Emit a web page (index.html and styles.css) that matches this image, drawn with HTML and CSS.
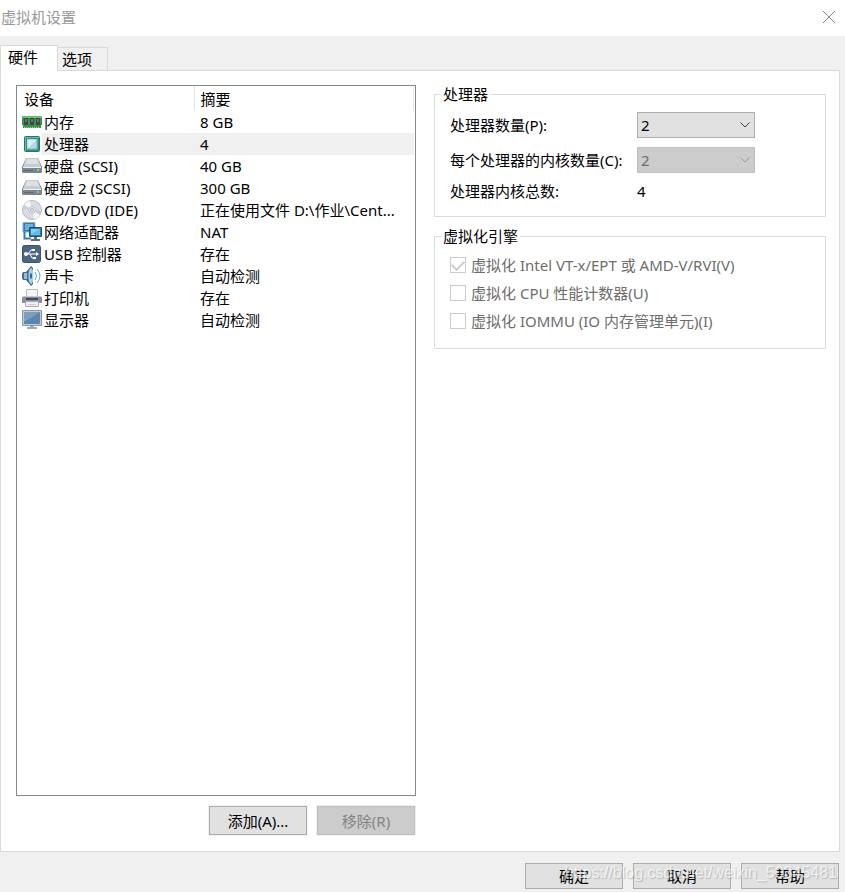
FILE: index.html
```html
<!DOCTYPE html>
<html lang="zh-CN">
<head>
<meta charset="utf-8">
<title>虚拟机设置</title>
<link rel="stylesheet" href="styles.css">
</head>
<body>
<main class="dialog">
  <header class="titlebar">
    <h1 class="title">虚拟机设置</h1>
    <button class="close" type="button" aria-label="关闭">
      <svg width="14" height="14" viewBox="0 0 14 14"><path d="M1 1L13 13M13 1L1 13" stroke="#858585" fill="none"/></svg>
    </button>
  </header>
  <nav class="tabs" role="tablist">
    <button class="tab tab-active" type="button" role="tab" aria-selected="true">硬件</button>
    <button class="tab" type="button" role="tab" aria-selected="false">选项</button>
  </nav>
  <section class="panel">
    <div class="devices">
      <div class="listbox">
        <table class="table">
          <thead>
            <tr><th class="col-device">设备</th><th>摘要</th></tr>
          </thead>
          <tbody>
            <tr><td><span class="device"><svg class="icon" viewBox="0 0 20 20"><path d="M0 4H20V13H19V16H1V13H0Z" fill="#2f9650"/><path d="M0 4H20V6H0Z" fill="#5fc474"/><path d="M2 6h4v7H2zM8 6h4v7H8zM14 6h4v7h-4z" fill="#4a4248"/><path d="M3 7h2v3H3zM9 7h2v3H9zM15 7h2v3h-2z" fill="#77706f"/><path d="M2 15.500H18" stroke="#d5bd57" stroke-dasharray="1 1"/></svg><span class="name">内存</span></span></td><td>8 GB</td></tr>
            <tr class="selected"><td><span class="device"><svg class="icon" viewBox="0 0 20 20"><rect x="2.500" y="2.500" width="15" height="15" rx="1" fill="#319678" stroke="#247b61"/><path d="M3 3.500H17M3.500 4V17" stroke="#61bea0"/><rect x="5" y="5" width="10" height="10" fill="#b8d9e5"/><path d="M6 6h8l-8 8z" fill="#dceff3"/><path d="M5 15h10V5" stroke="#80b5c3" fill="none"/></svg><span class="name">处理器</span></span></td><td>4</td></tr>
            <tr><td><span class="device"><svg class="icon" viewBox="0 0 20 20"><path d="M4 2H16L20 11V16L19 17H1L0 16V11Z" fill="#75818c"/><path d="M4 2H16L19 11H1Z" fill="#c6cbd0"/><path d="M5 3H15L17 8H3Z" fill="#dde0e3"/><path d="M1 12H19V16H1Z" fill="#7b8690"/><path d="M1 11.500H19" stroke="#eef0f2"/><path d="M15 13h2v2h-2z" fill="#67e26b"/><path d="M2 14.500H11" stroke="#5d6872"/></svg><span class="name">硬盘 (SCSI)</span></span></td><td>40 GB</td></tr>
            <tr><td><span class="device"><svg class="icon" viewBox="0 0 20 20"><path d="M4 2H16L20 11V16L19 17H1L0 16V11Z" fill="#75818c"/><path d="M4 2H16L19 11H1Z" fill="#c6cbd0"/><path d="M5 3H15L17 8H3Z" fill="#dde0e3"/><path d="M1 12H19V16H1Z" fill="#7b8690"/><path d="M1 11.500H19" stroke="#eef0f2"/><path d="M15 13h2v2h-2z" fill="#67e26b"/><path d="M2 14.500H11" stroke="#5d6872"/></svg><span class="name">硬盘 2 (SCSI)</span></span></td><td>300 GB</td></tr>
            <tr><td><span class="device"><svg class="icon" viewBox="0 0 20 20"><circle cx="10" cy="10" r="9.500" fill="#d9dce1" stroke="#b4b9c1"/><path d="M10 10L2 5A9 9 0 0 1 8 1ZM10 10L18 15A9 9 0 0 1 12 19Z" fill="#f4f6f8"/><path d="M10 10L1 9A9 9 0 0 1 2 5ZM10 10L19 11A9 9 0 0 1 18 15Z" fill="#c8ced6"/><circle cx="10" cy="10" r="3.500" fill="#e8ebee" stroke="#c0c4cb"/><circle cx="10" cy="10" r="1.500" fill="#fff" stroke="#a5abb3"/></svg><span class="name">CD/DVD (IDE)</span></span></td><td>正在使用文件 D:\作业\Cent...</td></tr>
            <tr><td><span class="device"><svg class="icon" viewBox="0 0 20 20"><path d="M1 .5H13V10H1Z" fill="#397cac" stroke="#8daec5"/><path d="M3 2H11V8H3Z" fill="#67b5df"/><path d="M7.500 5.500H19.500V14.500H7.500Z" fill="#2580bb" stroke="#244e70"/><path d="M9 7H18V13H9Z" fill="#67b9e5"/><path d="M9 7H18L9 12Z" fill="#90d0ef"/><path d="M12 15h3v2h3v2H9v-2h3z" fill="#596f80"/><path d="M2.500 10V16.500H9" stroke="#347fae" stroke-width="2" fill="none"/></svg><span class="name">网络适配器</span></span></td><td>NAT</td></tr>
            <tr><td><span class="device"><svg class="icon" viewBox="0 0 20 20"><rect x=".5" y="1.500" width="18" height="17" rx="2" fill="#4c6680" stroke="#3b536b"/><path d="M4 10H15M6 10L9 6H11M8 10L10 14H12" stroke="#fff" fill="none"/><circle cx="4" cy="10" r="2" fill="#fff"/><path d="M14 8l3 2-3 2zM10 5h3v2h-3zM11 13h3v2h-3z" fill="#fff"/></svg><span class="name">USB 控制器</span></span></td><td>存在</td></tr>
            <tr><td><span class="device"><svg class="icon" viewBox="0 0 20 20"><path d="M1 6H4L9 0L11 2V18L9 20L4 14H1L0 12V8Z" fill="#4a6680"/><path d="M2 7H5V13H2Z" fill="#9cbbd0"/><path d="M5 6L9 1V19L5 14Z" fill="#3279a9"/><ellipse cx="9" cy="10" rx="2.500" ry="8" fill="#a8cee4"/><ellipse cx="9" cy="10" rx="1" ry="3" fill="#315d80"/><path d="M13 6Q16 10 13 14M15 3Q21 10 15 17" stroke="#60a6d6" fill="none"/></svg><span class="name">声卡</span></span></td><td>自动检测</td></tr>
            <tr><td><span class="device"><svg class="icon" viewBox="0 0 20 20"><path d="M4.500 1.500H15.500V9H4.500Z" fill="#f3f5f8" stroke="#b6bac1"/><path d="M1 8H19L20 10V15H0V10Z" fill="#8d8f9f"/><path d="M1 8.500H19" stroke="#c7c9d2"/><path d="M4 10H16V12H4Z" fill="#454953"/><path d="M3.500 13.500H16.500V18.500H3.500Z" fill="#eff1f4" stroke="#a5a8b3"/><path d="M6 16.500H14" stroke="#c5c9d2"/></svg><span class="name">打印机</span></span></td><td>存在</td></tr>
            <tr><td><span class="device"><svg class="icon" viewBox="0 0 20 20"><path d="M.5 .5H19.500V15.500H.5Z" fill="#c0cbd5" stroke="#8698a8"/><path d="M2 2H18V14H2Z" fill="#5d86ad"/><path d="M2 2H18L2 12Z" fill="#7c9fc0"/><path d="M8 16h4v1h3v2H5v-2h3z" fill="#9aabb8"/></svg><span class="name">显示器</span></span></td><td>自动检测</td></tr>
          </tbody>
        </table>
      </div>
      <div class="list-actions">
        <button class="button button-tall" type="button">添加(A)...</button>
        <button class="button button-tall" type="button" disabled>移除(R)</button>
      </div>
    </div>
    <form class="settings">
      <fieldset class="group">
        <legend>处理器</legend>
        <div class="fields">
          <label for="cpus">处理器数量(P):</label>
          <span class="combo">
            <select id="cpus"><option>1</option><option selected>2</option><option>4</option></select>
            <svg class="chevron" width="10" height="6" viewBox="0 0 10 6"><path d="M.5 .5L5 5L9.500 .5" stroke="#404040" fill="none"/></svg>
          </span>
          <label for="cores">每个处理器的内核数量(C):</label>
          <span class="combo">
            <select id="cores" disabled><option>1</option><option selected>2</option><option>4</option></select>
            <svg class="chevron" width="10" height="6" viewBox="0 0 10 6"><path d="M.5 .5L5 5L9.500 .5" stroke="#9b9b9b" fill="none"/></svg>
          </span>
          <span>处理器内核总数:</span>
          <output for="cpus cores">4</output>
        </div>
      </fieldset>
      <fieldset class="group">
        <legend>虚拟化引擎</legend>
        <div class="checks">
          <label class="check"><input type="checkbox" checked disabled><span>虚拟化 Intel VT-x/EPT 或 AMD-V/RVI(V)</span></label>
          <label class="check"><input type="checkbox" disabled><span>虚拟化 CPU 性能计数器(U)</span></label>
          <label class="check"><input type="checkbox" disabled><span>虚拟化 IOMMU (IO 内存管理单元)(I)</span></label>
        </div>
      </fieldset>
    </form>
  </section>
  <footer class="footer">
    <button class="button" type="button">确定</button>
    <button class="button" type="button">取消</button>
    <button class="button" type="button">帮助</button>
    <span class="watermark">https://blog.csdn.net/weixin_50345481</span>
  </footer>
</main>
</body>
</html>
```
FILE: styles.css
```css
* { box-sizing: border-box; }

body {
  margin: 0;
  background: #f0f0f0;
  color: #000;
  font: 15px/18px "Noto Sans", "Noto Sans CJK SC", sans-serif;
}

button, select {
  font: inherit;
  color: inherit;
}

.dialog {
  display: flex;
  flex-direction: column;
  min-height: 100vh;
}

.titlebar {
  display: flex;
  align-items: center;
  justify-content: space-between;
  height: 36px;
  padding: 0 8px 2px 1px;
  background: #fff;
}

.title {
  margin: 0;
  font-size: 15px;
  font-weight: 400;
  color: #999;
}

.close {
  display: flex;
  padding: 1px;
  border: 0;
  background: none;
}

.tabs {
  display: flex;
  align-items: flex-end;
  height: 34px;
}

.tab {
  height: 23px;
  padding: 0 15px 0 4px;
  border: 1px solid #d9d9d9;
  border-width: 1px 1px 0 0;
  background: #f0f0f0;
}

.tab-active {
  z-index: 1;
  height: 26px;
  margin-bottom: -1px;
  padding: 0 19px 3px 7px;
  border-left-width: 1px;
  background: #fff;
}

.panel {
  display: grid;
  grid-template-columns: minmax(0, 400fr) minmax(0, 392fr);
  gap: 18px;
  flex: 1;
  margin-right: 5px;
  padding: 14px 13px 16px 15px;
  border: 1px solid #d9d9d9;
  background: #fff;
}

.devices {
  display: flex;
  flex-direction: column;
  gap: 10px;
}

.listbox {
  flex: 1;
  padding-right: 1px;
  border: 1px solid #828790;
}

.table {
  width: 100%;
  table-layout: fixed;
  border-collapse: collapse;
  white-space: nowrap;
}

.table th {
  height: 25px;
  padding: 0 6px;
  border-right: 1px solid #e5e5e5;
  font-weight: 400;
  text-align: left;
}

.table .col-device {
  width: 177px;
  padding-left: 7px;
}

.table td {
  height: 22px;
  padding: 0 6px;
}

.table td:first-child { padding: 0 0 0 5px; }

.device {
  display: flex;
  align-items: center;
}

.icon {
  flex: none;
  width: 20px;
  height: 20px;
}

.name {
  flex: 1;
  padding-left: 2px;
  line-height: 22px;
}

.selected .name,
.selected td:last-child { background: #f0f0f0; }

.list-actions {
  display: flex;
  justify-content: flex-end;
  gap: 10px;
  padding-right: 1px;
}

.button {
  width: 98px;
  height: 26px;
  padding: 0;
  border: 1px solid #adadad;
  background: #e1e1e1;
}

.button-tall {
  height: 29px;
  box-shadow: 0 0 0 1px #f0f0f0;
}

.button:disabled {
  border-color: #bfbfbf;
  background: #ccc;
  color: #838383;
}

.settings {
  display: flex;
  flex-direction: column;
  gap: 10px;
}

.group {
  min-width: 0;
  margin: 0;
  padding: 0 15px;
  border: 1px solid #dcdcdc;
}

.group legend {
  margin-left: -9px;
  padding: 0 2px;
}

.fields {
  display: grid;
  grid-template-columns: 187px minmax(0, 118px);
  align-items: center;
  gap: 9px 0;
  padding: 9px 0 16px;
  white-space: nowrap;
}

.combo {
  display: flex;
  align-items: center;
  position: relative;
}

.combo select {
  width: 100%;
  height: 26px;
  padding: 0 3px;
  border: 1px solid #adadad;
  border-radius: 0;
  background: #e1e1e1;
  appearance: none;
}

.combo select:disabled {
  border-color: #bfbfbf;
  background: #ccc;
  color: #6d6d6d;
  opacity: 1;
}

.chevron {
  position: absolute;
  right: 5px;
  pointer-events: none;
}

.checks {
  display: flex;
  flex-direction: column;
  gap: 8px;
  padding: 10px 0 17px;
}

.check {
  display: flex;
  align-items: center;
  gap: 5px;
  height: 20px;
  color: #6d6d6d;
  white-space: nowrap;
}

.check input {
  display: grid;
  place-items: center;
  width: 16px;
  height: 16px;
  margin: 0;
  border: 1px solid #ccc;
  background: #fff;
  appearance: none;
}

.check input:checked::before {
  content: "";
  width: 10px;
  height: 6px;
  margin-bottom: 3px;
  border: solid #ccc;
  border-width: 0 0 2px 2px;
  rotate: -45deg;
}

.footer {
  display: flex;
  justify-content: flex-end;
  gap: 10px;
  position: relative;
  padding: 11px 6px 3px;
}

.watermark {
  position: absolute;
  right: 8px;
  top: 12px;
  font: 16px/18px "Liberation Sans", sans-serif;
  color: rgba(255, 255, 255, .7);
  text-shadow: 1px 1px 1px rgba(120, 120, 120, .4);
  pointer-events: none;
}
```
